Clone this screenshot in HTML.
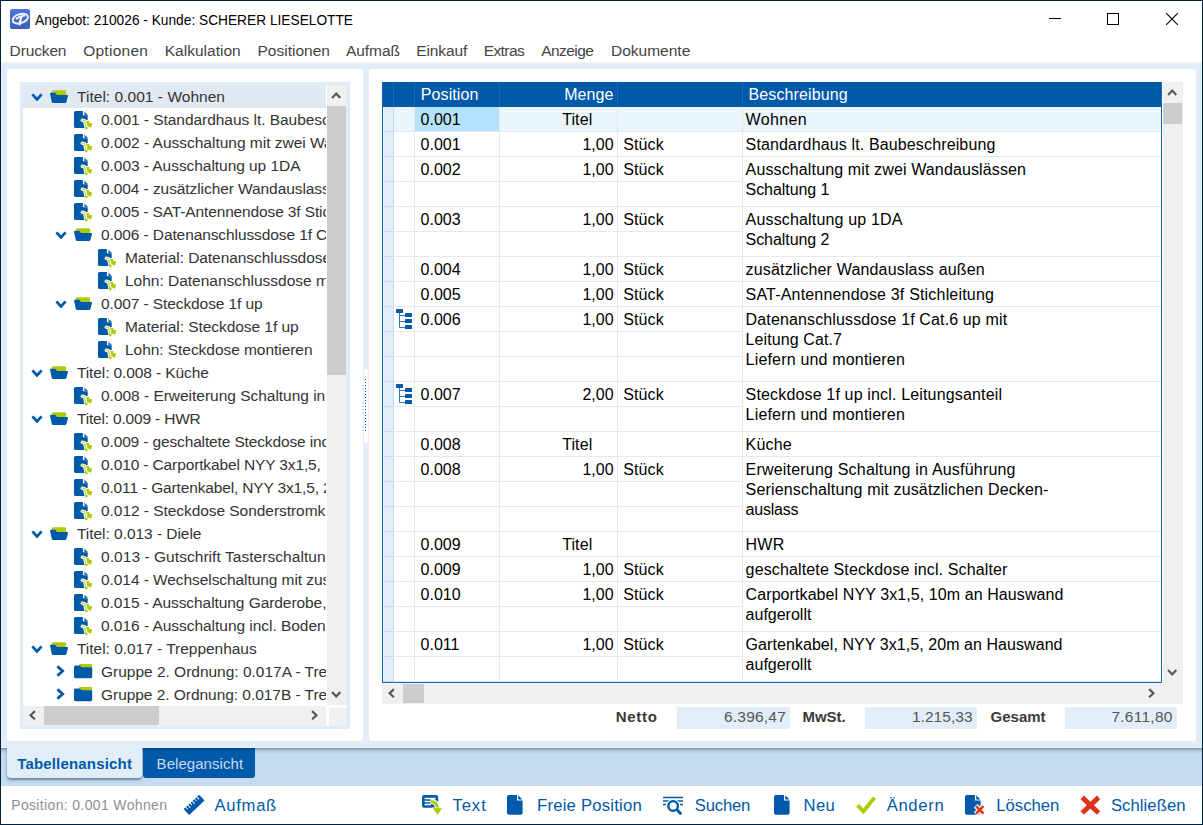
<!DOCTYPE html>
<html lang="de"><head><meta charset="utf-8"><title>Angebot: 210026 - Kunde: SCHERER LIESELOTTE</title>
<style>
html,body{margin:0;padding:0}
body{width:1203px;height:825px;position:relative;overflow:hidden;background:#fff;font-family:"Liberation Sans", Arial, sans-serif}
.b,.i,.t{position:absolute}
.t{white-space:pre;line-height:20px;height:20px}
.tr{font-size:15.5px;color:#333}
.a{letter-spacing:0}
</style></head>
<body>
<div class="b" style="left:0px;top:0px;width:1203px;height:825px;background:#fff;box-sizing:border-box;border:1px solid #02213f"></div>
<header class="titlebar">
<svg class="i" style="left:10px;top:9px" width="20" height="20" viewBox="0 0 20 20"><defs><linearGradient id="g" x1="0" y1="0" x2="0" y2="1"><stop offset="0" stop-color="#4d76da"/><stop offset="1" stop-color="#3a60bf"/></linearGradient></defs><rect width="20" height="20" rx="2.6" fill="url(#g)"/><ellipse cx="10.3" cy="9.6" rx="7.9" ry="4.5" transform="rotate(-17 10.3 9.6)" fill="none" stroke="#fff" stroke-width="1.9" opacity=".93"/><path d="M5.8 10Q9.6 7.2 15.2 6.4" stroke="#fff" stroke-width="1.7" fill="none" opacity=".95"/><path d="M11.3 7.6L9.3 16.2" stroke="#fff" stroke-width="2.2" fill="none" opacity=".97"/></svg>
<span class="t " style="top:9.63px;font-size:15.5px;color:#000;left:35.00px;transform:scaleX(0.8851);transform-origin:0 0;">Angebot: 210026 - Kunde: SCHERER LIESELOTTE</span>
<div class="b" style="left:1049px;top:18px;width:12px;height:1px;background:#000;"></div>
<div class="b" style="left:1107px;top:13px;width:12px;height:12px;background:transparent;box-sizing:border-box;border:1px solid #000"></div>
<svg class="i" style="left:1165px;top:12px" width="14" height="14" viewBox="0 0 14 14"><path d="M1.2 1.2L12.8 12.8M12.8 1.2L1.2 12.8" stroke="#000" stroke-width="1.1" fill="none"/></svg>
</header>
<nav class="menubar">
<span class="t " style="top:40.63px;font-size:15.5px;color:#444;letter-spacing:-0.136px;left:9.60px;">Drucken</span>
<span class="t " style="top:40.63px;font-size:15.5px;color:#444;letter-spacing:0.254px;left:83.20px;">Optionen</span>
<span class="t " style="top:40.63px;font-size:15.5px;color:#444;letter-spacing:0.017px;left:164.70px;">Kalkulation</span>
<span class="t " style="top:40.63px;font-size:15.5px;color:#444;letter-spacing:0.012px;left:257.50px;">Positionen</span>
<span class="t " style="top:40.63px;font-size:15.5px;color:#444;letter-spacing:-0.073px;left:346.00px;">Aufmaß</span>
<span class="t " style="top:40.63px;font-size:15.5px;color:#444;letter-spacing:-0.134px;left:416.30px;">Einkauf</span>
<span class="t " style="top:40.63px;font-size:15.5px;color:#444;letter-spacing:-0.588px;left:483.70px;">Extras</span>
<span class="t " style="top:40.63px;font-size:15.5px;color:#444;letter-spacing:-0.553px;left:541.20px;">Anzeige</span>
<span class="t " style="top:40.63px;font-size:15.5px;color:#444;letter-spacing:0.004px;left:611.00px;">Dokumente</span>
</nav>
<main class="content">
<div class="b" style="left:1px;top:62px;width:1201px;height:1px;background:#f0f0f0;"></div>
<div class="b" style="left:1px;top:63px;width:1201px;height:685px;background:#e1eefa;"></div>
<div class="b" style="left:1px;top:747px;width:1201px;height:1px;background:#e8f3fd;"></div>
<div class="b" style="left:7px;top:69px;width:356px;height:672px;background:#fff;border-radius:3px"></div>
<div class="b" style="left:369px;top:69px;width:827px;height:672px;background:#fff;border-radius:3px"></div>
<div class="b" style="left:364px;top:369px;width:4px;height:74px;background:#fff;border-radius:1px"></div>
<div class="b" style="left:365px;top:379px;width:1px;height:52px;background:transparent;background-image:repeating-linear-gradient(to bottom,#0059a9 0,#0059a9 1px,transparent 1px,transparent 3px)"></div>
<section class="tree-panel">
<div class="b" style="left:20px;top:82px;width:330px;height:647px;background:#fff;box-sizing:border-box;border:3px solid #deebf8"></div>
<div class="b" style="left:23px;top:85px;width:303px;height:23px;background:#e1e9f2;"></div>
<div class="b" style="left:23px;top:85px;width:303px;height:621px;overflow:hidden"><svg class="i" style="left:7.600000000000001px;top:7.6px" width="12" height="8.4" viewBox="0 0 12 8.4"><path d="M1.4 1.4L6.0 6.412000000000001L10.6 1.4" fill="none" stroke="#0059a9" stroke-width="2.8"/></svg><svg class="i" style="left:27px;top:5.2px" width="19" height="14" viewBox="0 0 19 14"><rect x="1.7" y="0.2" width="14.5" height="6.4" rx="1.5" fill="#afca0b"/><path fill="#0059a9" d="M1 2.8H4.8Q5.5 2.8 5.9 3.4L6.9 4.9H17.1Q18.3 4.9 18 6L16.4 12Q16.1 13 15 13H3.2Q2.1 13 1.8 12L0.1 4Q-0.2 2.8 1 2.8Z"/></svg><span class="t tr" style="left:54.0px;top:1.63px;letter-spacing:0.033px;">Titel: 0.001 - Wohnen</span><svg class="i" style="left:51.2px;top:26px" width="19" height="19" viewBox="0 0 19 19"><path fill="#0059a9" d="M1.5 0H8.9V4.2H13.7V15.5Q13.7 17 12.2 17H1.5Q0 17 0 15.5V1.5Q0 0 1.5 0Z"/><path fill="#2a70b6" d="M10.3 0.4L13.5 3.6L13.6 4.2H10.3Z"/><path fill="#fff" d="M6.6 8.9Q7.2 7.4 8.8 7.6L11.4 8.2 12.6 9.6 14.2 8.6V17.6H10.6L9.2 11.2 7.2 10.6Q6.2 10 6.6 8.9Z"/><path fill="none" stroke="#afca0b" stroke-opacity=".75" stroke-width="1.3" d="M7.6 8.9L10.5 9.5 11.9 16"/><path fill="#afca0b" d="M12.3 9.9L15.2 10 15.4 12 18 12.2 18 14.4 17.2 14.6 17.6 16.2 13.4 15.4 12.8 12Z"/><rect x="11.2" y="15.9" width="2.3" height="2.3" fill="#afca0b"/><rect x="15.4" y="16.4" width="1.6" height="1.2" fill="#afca0b" opacity=".55"/></svg><span class="t tr" style="left:78.0px;top:24.63px;letter-spacing:-0.043px;">0.001 - Standardhaus lt. Baubeschreibung</span><svg class="i" style="left:51.2px;top:49px" width="19" height="19" viewBox="0 0 19 19"><path fill="#0059a9" d="M1.5 0H8.9V4.2H13.7V15.5Q13.7 17 12.2 17H1.5Q0 17 0 15.5V1.5Q0 0 1.5 0Z"/><path fill="#2a70b6" d="M10.3 0.4L13.5 3.6L13.6 4.2H10.3Z"/><path fill="#fff" d="M6.6 8.9Q7.2 7.4 8.8 7.6L11.4 8.2 12.6 9.6 14.2 8.6V17.6H10.6L9.2 11.2 7.2 10.6Q6.2 10 6.6 8.9Z"/><path fill="none" stroke="#afca0b" stroke-opacity=".75" stroke-width="1.3" d="M7.6 8.9L10.5 9.5 11.9 16"/><path fill="#afca0b" d="M12.3 9.9L15.2 10 15.4 12 18 12.2 18 14.4 17.2 14.6 17.6 16.2 13.4 15.4 12.8 12Z"/><rect x="11.2" y="15.9" width="2.3" height="2.3" fill="#afca0b"/><rect x="15.4" y="16.4" width="1.6" height="1.2" fill="#afca0b" opacity=".55"/></svg><span class="t tr" style="left:78.0px;top:47.63px;letter-spacing:-0.013px;">0.002 - Ausschaltung mit zwei Wandauslässen</span><svg class="i" style="left:51.2px;top:72px" width="19" height="19" viewBox="0 0 19 19"><path fill="#0059a9" d="M1.5 0H8.9V4.2H13.7V15.5Q13.7 17 12.2 17H1.5Q0 17 0 15.5V1.5Q0 0 1.5 0Z"/><path fill="#2a70b6" d="M10.3 0.4L13.5 3.6L13.6 4.2H10.3Z"/><path fill="#fff" d="M6.6 8.9Q7.2 7.4 8.8 7.6L11.4 8.2 12.6 9.6 14.2 8.6V17.6H10.6L9.2 11.2 7.2 10.6Q6.2 10 6.6 8.9Z"/><path fill="none" stroke="#afca0b" stroke-opacity=".75" stroke-width="1.3" d="M7.6 8.9L10.5 9.5 11.9 16"/><path fill="#afca0b" d="M12.3 9.9L15.2 10 15.4 12 18 12.2 18 14.4 17.2 14.6 17.6 16.2 13.4 15.4 12.8 12Z"/><rect x="11.2" y="15.9" width="2.3" height="2.3" fill="#afca0b"/><rect x="15.4" y="16.4" width="1.6" height="1.2" fill="#afca0b" opacity=".55"/></svg><span class="t tr" style="left:78.0px;top:70.63px;letter-spacing:-0.049px;">0.003 - Ausschaltung up 1DA</span><svg class="i" style="left:51.2px;top:95px" width="19" height="19" viewBox="0 0 19 19"><path fill="#0059a9" d="M1.5 0H8.9V4.2H13.7V15.5Q13.7 17 12.2 17H1.5Q0 17 0 15.5V1.5Q0 0 1.5 0Z"/><path fill="#2a70b6" d="M10.3 0.4L13.5 3.6L13.6 4.2H10.3Z"/><path fill="#fff" d="M6.6 8.9Q7.2 7.4 8.8 7.6L11.4 8.2 12.6 9.6 14.2 8.6V17.6H10.6L9.2 11.2 7.2 10.6Q6.2 10 6.6 8.9Z"/><path fill="none" stroke="#afca0b" stroke-opacity=".75" stroke-width="1.3" d="M7.6 8.9L10.5 9.5 11.9 16"/><path fill="#afca0b" d="M12.3 9.9L15.2 10 15.4 12 18 12.2 18 14.4 17.2 14.6 17.6 16.2 13.4 15.4 12.8 12Z"/><rect x="11.2" y="15.9" width="2.3" height="2.3" fill="#afca0b"/><rect x="15.4" y="16.4" width="1.6" height="1.2" fill="#afca0b" opacity=".55"/></svg><span class="t tr" style="left:78.0px;top:93.63px;letter-spacing:-0.079px;">0.004 - zusätzlicher Wandauslass außen</span><svg class="i" style="left:51.2px;top:118px" width="19" height="19" viewBox="0 0 19 19"><path fill="#0059a9" d="M1.5 0H8.9V4.2H13.7V15.5Q13.7 17 12.2 17H1.5Q0 17 0 15.5V1.5Q0 0 1.5 0Z"/><path fill="#2a70b6" d="M10.3 0.4L13.5 3.6L13.6 4.2H10.3Z"/><path fill="#fff" d="M6.6 8.9Q7.2 7.4 8.8 7.6L11.4 8.2 12.6 9.6 14.2 8.6V17.6H10.6L9.2 11.2 7.2 10.6Q6.2 10 6.6 8.9Z"/><path fill="none" stroke="#afca0b" stroke-opacity=".75" stroke-width="1.3" d="M7.6 8.9L10.5 9.5 11.9 16"/><path fill="#afca0b" d="M12.3 9.9L15.2 10 15.4 12 18 12.2 18 14.4 17.2 14.6 17.6 16.2 13.4 15.4 12.8 12Z"/><rect x="11.2" y="15.9" width="2.3" height="2.3" fill="#afca0b"/><rect x="15.4" y="16.4" width="1.6" height="1.2" fill="#afca0b" opacity=".55"/></svg><span class="t tr" style="left:78.0px;top:116.63px;letter-spacing:-0.132px;">0.005 - SAT-Antennendose 3f Stichleitung</span><svg class="i" style="left:31.6px;top:145.6px" width="12" height="8.4" viewBox="0 0 12 8.4"><path d="M1.4 1.4L6.0 6.412000000000001L10.6 1.4" fill="none" stroke="#0059a9" stroke-width="2.8"/></svg><svg class="i" style="left:51px;top:143.2px" width="19" height="14" viewBox="0 0 19 14"><rect x="1.7" y="0.2" width="14.5" height="6.4" rx="1.5" fill="#afca0b"/><path fill="#0059a9" d="M1 2.8H4.8Q5.5 2.8 5.9 3.4L6.9 4.9H17.1Q18.3 4.9 18 6L16.4 12Q16.1 13 15 13H3.2Q2.1 13 1.8 12L0.1 4Q-0.2 2.8 1 2.8Z"/></svg><span class="t tr" style="left:78.0px;top:139.63px;letter-spacing:-0.097px;">0.006 - Datenanschlussdose 1f Cat.6 up mit</span><svg class="i" style="left:75.2px;top:164px" width="19" height="19" viewBox="0 0 19 19"><path fill="#0059a9" d="M1.5 0H8.9V4.2H13.7V15.5Q13.7 17 12.2 17H1.5Q0 17 0 15.5V1.5Q0 0 1.5 0Z"/><path fill="#2a70b6" d="M10.3 0.4L13.5 3.6L13.6 4.2H10.3Z"/><path fill="#fff" d="M6.6 8.9Q7.2 7.4 8.8 7.6L11.4 8.2 12.6 9.6 14.2 8.6V17.6H10.6L9.2 11.2 7.2 10.6Q6.2 10 6.6 8.9Z"/><path fill="none" stroke="#afca0b" stroke-opacity=".75" stroke-width="1.3" d="M7.6 8.9L10.5 9.5 11.9 16"/><path fill="#afca0b" d="M12.3 9.9L15.2 10 15.4 12 18 12.2 18 14.4 17.2 14.6 17.6 16.2 13.4 15.4 12.8 12Z"/><rect x="11.2" y="15.9" width="2.3" height="2.3" fill="#afca0b"/><rect x="15.4" y="16.4" width="1.6" height="1.2" fill="#afca0b" opacity=".55"/></svg><span class="t tr" style="left:102.0px;top:162.63px;letter-spacing:-0.060px;">Material: Datenanschlussdose 1f Cat.6</span><svg class="i" style="left:75.2px;top:187px" width="19" height="19" viewBox="0 0 19 19"><path fill="#0059a9" d="M1.5 0H8.9V4.2H13.7V15.5Q13.7 17 12.2 17H1.5Q0 17 0 15.5V1.5Q0 0 1.5 0Z"/><path fill="#2a70b6" d="M10.3 0.4L13.5 3.6L13.6 4.2H10.3Z"/><path fill="#fff" d="M6.6 8.9Q7.2 7.4 8.8 7.6L11.4 8.2 12.6 9.6 14.2 8.6V17.6H10.6L9.2 11.2 7.2 10.6Q6.2 10 6.6 8.9Z"/><path fill="none" stroke="#afca0b" stroke-opacity=".75" stroke-width="1.3" d="M7.6 8.9L10.5 9.5 11.9 16"/><path fill="#afca0b" d="M12.3 9.9L15.2 10 15.4 12 18 12.2 18 14.4 17.2 14.6 17.6 16.2 13.4 15.4 12.8 12Z"/><rect x="11.2" y="15.9" width="2.3" height="2.3" fill="#afca0b"/><rect x="15.4" y="16.4" width="1.6" height="1.2" fill="#afca0b" opacity=".55"/></svg><span class="t tr" style="left:102.0px;top:185.63px;letter-spacing:-0.016px;">Lohn: Datenanschlussdose montieren</span><svg class="i" style="left:31.6px;top:214.6px" width="12" height="8.4" viewBox="0 0 12 8.4"><path d="M1.4 1.4L6.0 6.412000000000001L10.6 1.4" fill="none" stroke="#0059a9" stroke-width="2.8"/></svg><svg class="i" style="left:51px;top:212.2px" width="19" height="14" viewBox="0 0 19 14"><rect x="1.7" y="0.2" width="14.5" height="6.4" rx="1.5" fill="#afca0b"/><path fill="#0059a9" d="M1 2.8H4.8Q5.5 2.8 5.9 3.4L6.9 4.9H17.1Q18.3 4.9 18 6L16.4 12Q16.1 13 15 13H3.2Q2.1 13 1.8 12L0.1 4Q-0.2 2.8 1 2.8Z"/></svg><span class="t tr" style="left:78.0px;top:208.63px;letter-spacing:-0.096px;">0.007 - Steckdose 1f up</span><svg class="i" style="left:75.2px;top:233px" width="19" height="19" viewBox="0 0 19 19"><path fill="#0059a9" d="M1.5 0H8.9V4.2H13.7V15.5Q13.7 17 12.2 17H1.5Q0 17 0 15.5V1.5Q0 0 1.5 0Z"/><path fill="#2a70b6" d="M10.3 0.4L13.5 3.6L13.6 4.2H10.3Z"/><path fill="#fff" d="M6.6 8.9Q7.2 7.4 8.8 7.6L11.4 8.2 12.6 9.6 14.2 8.6V17.6H10.6L9.2 11.2 7.2 10.6Q6.2 10 6.6 8.9Z"/><path fill="none" stroke="#afca0b" stroke-opacity=".75" stroke-width="1.3" d="M7.6 8.9L10.5 9.5 11.9 16"/><path fill="#afca0b" d="M12.3 9.9L15.2 10 15.4 12 18 12.2 18 14.4 17.2 14.6 17.6 16.2 13.4 15.4 12.8 12Z"/><rect x="11.2" y="15.9" width="2.3" height="2.3" fill="#afca0b"/><rect x="15.4" y="16.4" width="1.6" height="1.2" fill="#afca0b" opacity=".55"/></svg><span class="t tr" style="left:102.0px;top:231.63px;letter-spacing:-0.054px;">Material: Steckdose 1f up</span><svg class="i" style="left:75.2px;top:256px" width="19" height="19" viewBox="0 0 19 19"><path fill="#0059a9" d="M1.5 0H8.9V4.2H13.7V15.5Q13.7 17 12.2 17H1.5Q0 17 0 15.5V1.5Q0 0 1.5 0Z"/><path fill="#2a70b6" d="M10.3 0.4L13.5 3.6L13.6 4.2H10.3Z"/><path fill="#fff" d="M6.6 8.9Q7.2 7.4 8.8 7.6L11.4 8.2 12.6 9.6 14.2 8.6V17.6H10.6L9.2 11.2 7.2 10.6Q6.2 10 6.6 8.9Z"/><path fill="none" stroke="#afca0b" stroke-opacity=".75" stroke-width="1.3" d="M7.6 8.9L10.5 9.5 11.9 16"/><path fill="#afca0b" d="M12.3 9.9L15.2 10 15.4 12 18 12.2 18 14.4 17.2 14.6 17.6 16.2 13.4 15.4 12.8 12Z"/><rect x="11.2" y="15.9" width="2.3" height="2.3" fill="#afca0b"/><rect x="15.4" y="16.4" width="1.6" height="1.2" fill="#afca0b" opacity=".55"/></svg><span class="t tr" style="left:102.0px;top:254.63px;letter-spacing:-0.050px;">Lohn: Steckdose montieren</span><svg class="i" style="left:7.600000000000001px;top:283.6px" width="12" height="8.4" viewBox="0 0 12 8.4"><path d="M1.4 1.4L6.0 6.412000000000001L10.6 1.4" fill="none" stroke="#0059a9" stroke-width="2.8"/></svg><svg class="i" style="left:27px;top:281.2px" width="19" height="14" viewBox="0 0 19 14"><rect x="1.7" y="0.2" width="14.5" height="6.4" rx="1.5" fill="#afca0b"/><path fill="#0059a9" d="M1 2.8H4.8Q5.5 2.8 5.9 3.4L6.9 4.9H17.1Q18.3 4.9 18 6L16.4 12Q16.1 13 15 13H3.2Q2.1 13 1.8 12L0.1 4Q-0.2 2.8 1 2.8Z"/></svg><span class="t tr" style="left:54.0px;top:277.63px;letter-spacing:-0.108px;">Titel: 0.008 - Küche</span><svg class="i" style="left:51.2px;top:302px" width="19" height="19" viewBox="0 0 19 19"><path fill="#0059a9" d="M1.5 0H8.9V4.2H13.7V15.5Q13.7 17 12.2 17H1.5Q0 17 0 15.5V1.5Q0 0 1.5 0Z"/><path fill="#2a70b6" d="M10.3 0.4L13.5 3.6L13.6 4.2H10.3Z"/><path fill="#fff" d="M6.6 8.9Q7.2 7.4 8.8 7.6L11.4 8.2 12.6 9.6 14.2 8.6V17.6H10.6L9.2 11.2 7.2 10.6Q6.2 10 6.6 8.9Z"/><path fill="none" stroke="#afca0b" stroke-opacity=".75" stroke-width="1.3" d="M7.6 8.9L10.5 9.5 11.9 16"/><path fill="#afca0b" d="M12.3 9.9L15.2 10 15.4 12 18 12.2 18 14.4 17.2 14.6 17.6 16.2 13.4 15.4 12.8 12Z"/><rect x="11.2" y="15.9" width="2.3" height="2.3" fill="#afca0b"/><rect x="15.4" y="16.4" width="1.6" height="1.2" fill="#afca0b" opacity=".55"/></svg><span class="t tr" style="left:78.0px;top:300.63px;letter-spacing:-0.022px;">0.008 - Erweiterung Schaltung in Ausführung</span><svg class="i" style="left:7.600000000000001px;top:329.6px" width="12" height="8.4" viewBox="0 0 12 8.4"><path d="M1.4 1.4L6.0 6.412000000000001L10.6 1.4" fill="none" stroke="#0059a9" stroke-width="2.8"/></svg><svg class="i" style="left:27px;top:327.2px" width="19" height="14" viewBox="0 0 19 14"><rect x="1.7" y="0.2" width="14.5" height="6.4" rx="1.5" fill="#afca0b"/><path fill="#0059a9" d="M1 2.8H4.8Q5.5 2.8 5.9 3.4L6.9 4.9H17.1Q18.3 4.9 18 6L16.4 12Q16.1 13 15 13H3.2Q2.1 13 1.8 12L0.1 4Q-0.2 2.8 1 2.8Z"/></svg><span class="t tr" style="left:54.0px;top:323.63px;letter-spacing:-0.183px;">Titel: 0.009 - HWR</span><svg class="i" style="left:51.2px;top:348px" width="19" height="19" viewBox="0 0 19 19"><path fill="#0059a9" d="M1.5 0H8.9V4.2H13.7V15.5Q13.7 17 12.2 17H1.5Q0 17 0 15.5V1.5Q0 0 1.5 0Z"/><path fill="#2a70b6" d="M10.3 0.4L13.5 3.6L13.6 4.2H10.3Z"/><path fill="#fff" d="M6.6 8.9Q7.2 7.4 8.8 7.6L11.4 8.2 12.6 9.6 14.2 8.6V17.6H10.6L9.2 11.2 7.2 10.6Q6.2 10 6.6 8.9Z"/><path fill="none" stroke="#afca0b" stroke-opacity=".75" stroke-width="1.3" d="M7.6 8.9L10.5 9.5 11.9 16"/><path fill="#afca0b" d="M12.3 9.9L15.2 10 15.4 12 18 12.2 18 14.4 17.2 14.6 17.6 16.2 13.4 15.4 12.8 12Z"/><rect x="11.2" y="15.9" width="2.3" height="2.3" fill="#afca0b"/><rect x="15.4" y="16.4" width="1.6" height="1.2" fill="#afca0b" opacity=".55"/></svg><span class="t tr" style="left:78.0px;top:346.63px;letter-spacing:-0.138px;">0.009 - geschaltete Steckdose incl. Schalter</span><svg class="i" style="left:51.2px;top:371px" width="19" height="19" viewBox="0 0 19 19"><path fill="#0059a9" d="M1.5 0H8.9V4.2H13.7V15.5Q13.7 17 12.2 17H1.5Q0 17 0 15.5V1.5Q0 0 1.5 0Z"/><path fill="#2a70b6" d="M10.3 0.4L13.5 3.6L13.6 4.2H10.3Z"/><path fill="#fff" d="M6.6 8.9Q7.2 7.4 8.8 7.6L11.4 8.2 12.6 9.6 14.2 8.6V17.6H10.6L9.2 11.2 7.2 10.6Q6.2 10 6.6 8.9Z"/><path fill="none" stroke="#afca0b" stroke-opacity=".75" stroke-width="1.3" d="M7.6 8.9L10.5 9.5 11.9 16"/><path fill="#afca0b" d="M12.3 9.9L15.2 10 15.4 12 18 12.2 18 14.4 17.2 14.6 17.6 16.2 13.4 15.4 12.8 12Z"/><rect x="11.2" y="15.9" width="2.3" height="2.3" fill="#afca0b"/><rect x="15.4" y="16.4" width="1.6" height="1.2" fill="#afca0b" opacity=".55"/></svg><span class="t tr" style="left:78.0px;top:369.63px;letter-spacing:-0.127px;">0.010 - Carportkabel NYY 3x1,5, 10m an Hauswand</span><svg class="i" style="left:51.2px;top:394px" width="19" height="19" viewBox="0 0 19 19"><path fill="#0059a9" d="M1.5 0H8.9V4.2H13.7V15.5Q13.7 17 12.2 17H1.5Q0 17 0 15.5V1.5Q0 0 1.5 0Z"/><path fill="#2a70b6" d="M10.3 0.4L13.5 3.6L13.6 4.2H10.3Z"/><path fill="#fff" d="M6.6 8.9Q7.2 7.4 8.8 7.6L11.4 8.2 12.6 9.6 14.2 8.6V17.6H10.6L9.2 11.2 7.2 10.6Q6.2 10 6.6 8.9Z"/><path fill="none" stroke="#afca0b" stroke-opacity=".75" stroke-width="1.3" d="M7.6 8.9L10.5 9.5 11.9 16"/><path fill="#afca0b" d="M12.3 9.9L15.2 10 15.4 12 18 12.2 18 14.4 17.2 14.6 17.6 16.2 13.4 15.4 12.8 12Z"/><rect x="11.2" y="15.9" width="2.3" height="2.3" fill="#afca0b"/><rect x="15.4" y="16.4" width="1.6" height="1.2" fill="#afca0b" opacity=".55"/></svg><span class="t tr" style="left:78.0px;top:392.63px;letter-spacing:-0.153px;">0.011 - Gartenkabel, NYY 3x1,5, 20m an Hauswand</span><svg class="i" style="left:51.2px;top:417px" width="19" height="19" viewBox="0 0 19 19"><path fill="#0059a9" d="M1.5 0H8.9V4.2H13.7V15.5Q13.7 17 12.2 17H1.5Q0 17 0 15.5V1.5Q0 0 1.5 0Z"/><path fill="#2a70b6" d="M10.3 0.4L13.5 3.6L13.6 4.2H10.3Z"/><path fill="#fff" d="M6.6 8.9Q7.2 7.4 8.8 7.6L11.4 8.2 12.6 9.6 14.2 8.6V17.6H10.6L9.2 11.2 7.2 10.6Q6.2 10 6.6 8.9Z"/><path fill="none" stroke="#afca0b" stroke-opacity=".75" stroke-width="1.3" d="M7.6 8.9L10.5 9.5 11.9 16"/><path fill="#afca0b" d="M12.3 9.9L15.2 10 15.4 12 18 12.2 18 14.4 17.2 14.6 17.6 16.2 13.4 15.4 12.8 12Z"/><rect x="11.2" y="15.9" width="2.3" height="2.3" fill="#afca0b"/><rect x="15.4" y="16.4" width="1.6" height="1.2" fill="#afca0b" opacity=".55"/></svg><span class="t tr" style="left:78.0px;top:415.63px;letter-spacing:-0.051px;">0.012 - Steckdose Sonderstromkreis</span><svg class="i" style="left:7.600000000000001px;top:444.6px" width="12" height="8.4" viewBox="0 0 12 8.4"><path d="M1.4 1.4L6.0 6.412000000000001L10.6 1.4" fill="none" stroke="#0059a9" stroke-width="2.8"/></svg><svg class="i" style="left:27px;top:442.2px" width="19" height="14" viewBox="0 0 19 14"><rect x="1.7" y="0.2" width="14.5" height="6.4" rx="1.5" fill="#afca0b"/><path fill="#0059a9" d="M1 2.8H4.8Q5.5 2.8 5.9 3.4L6.9 4.9H17.1Q18.3 4.9 18 6L16.4 12Q16.1 13 15 13H3.2Q2.1 13 1.8 12L0.1 4Q-0.2 2.8 1 2.8Z"/></svg><span class="t tr" style="left:54.0px;top:438.63px;letter-spacing:-0.038px;">Titel: 0.013 - Diele</span><svg class="i" style="left:51.2px;top:463px" width="19" height="19" viewBox="0 0 19 19"><path fill="#0059a9" d="M1.5 0H8.9V4.2H13.7V15.5Q13.7 17 12.2 17H1.5Q0 17 0 15.5V1.5Q0 0 1.5 0Z"/><path fill="#2a70b6" d="M10.3 0.4L13.5 3.6L13.6 4.2H10.3Z"/><path fill="#fff" d="M6.6 8.9Q7.2 7.4 8.8 7.6L11.4 8.2 12.6 9.6 14.2 8.6V17.6H10.6L9.2 11.2 7.2 10.6Q6.2 10 6.6 8.9Z"/><path fill="none" stroke="#afca0b" stroke-opacity=".75" stroke-width="1.3" d="M7.6 8.9L10.5 9.5 11.9 16"/><path fill="#afca0b" d="M12.3 9.9L15.2 10 15.4 12 18 12.2 18 14.4 17.2 14.6 17.6 16.2 13.4 15.4 12.8 12Z"/><rect x="11.2" y="15.9" width="2.3" height="2.3" fill="#afca0b"/><rect x="15.4" y="16.4" width="1.6" height="1.2" fill="#afca0b" opacity=".55"/></svg><span class="t tr" style="left:78.0px;top:461.63px;letter-spacing:0.053px;">0.013 - Gutschrift Tasterschaltung</span><svg class="i" style="left:51.2px;top:486px" width="19" height="19" viewBox="0 0 19 19"><path fill="#0059a9" d="M1.5 0H8.9V4.2H13.7V15.5Q13.7 17 12.2 17H1.5Q0 17 0 15.5V1.5Q0 0 1.5 0Z"/><path fill="#2a70b6" d="M10.3 0.4L13.5 3.6L13.6 4.2H10.3Z"/><path fill="#fff" d="M6.6 8.9Q7.2 7.4 8.8 7.6L11.4 8.2 12.6 9.6 14.2 8.6V17.6H10.6L9.2 11.2 7.2 10.6Q6.2 10 6.6 8.9Z"/><path fill="none" stroke="#afca0b" stroke-opacity=".75" stroke-width="1.3" d="M7.6 8.9L10.5 9.5 11.9 16"/><path fill="#afca0b" d="M12.3 9.9L15.2 10 15.4 12 18 12.2 18 14.4 17.2 14.6 17.6 16.2 13.4 15.4 12.8 12Z"/><rect x="11.2" y="15.9" width="2.3" height="2.3" fill="#afca0b"/><rect x="15.4" y="16.4" width="1.6" height="1.2" fill="#afca0b" opacity=".55"/></svg><span class="t tr" style="left:78.0px;top:484.63px;letter-spacing:-0.072px;">0.014 - Wechselschaltung mit zusätzlichem</span><svg class="i" style="left:51.2px;top:509px" width="19" height="19" viewBox="0 0 19 19"><path fill="#0059a9" d="M1.5 0H8.9V4.2H13.7V15.5Q13.7 17 12.2 17H1.5Q0 17 0 15.5V1.5Q0 0 1.5 0Z"/><path fill="#2a70b6" d="M10.3 0.4L13.5 3.6L13.6 4.2H10.3Z"/><path fill="#fff" d="M6.6 8.9Q7.2 7.4 8.8 7.6L11.4 8.2 12.6 9.6 14.2 8.6V17.6H10.6L9.2 11.2 7.2 10.6Q6.2 10 6.6 8.9Z"/><path fill="none" stroke="#afca0b" stroke-opacity=".75" stroke-width="1.3" d="M7.6 8.9L10.5 9.5 11.9 16"/><path fill="#afca0b" d="M12.3 9.9L15.2 10 15.4 12 18 12.2 18 14.4 17.2 14.6 17.6 16.2 13.4 15.4 12.8 12Z"/><rect x="11.2" y="15.9" width="2.3" height="2.3" fill="#afca0b"/><rect x="15.4" y="16.4" width="1.6" height="1.2" fill="#afca0b" opacity=".55"/></svg><span class="t tr" style="left:78.0px;top:507.63px;letter-spacing:-0.067px;">0.015 - Ausschaltung Garderobe, Flur</span><svg class="i" style="left:51.2px;top:532px" width="19" height="19" viewBox="0 0 19 19"><path fill="#0059a9" d="M1.5 0H8.9V4.2H13.7V15.5Q13.7 17 12.2 17H1.5Q0 17 0 15.5V1.5Q0 0 1.5 0Z"/><path fill="#2a70b6" d="M10.3 0.4L13.5 3.6L13.6 4.2H10.3Z"/><path fill="#fff" d="M6.6 8.9Q7.2 7.4 8.8 7.6L11.4 8.2 12.6 9.6 14.2 8.6V17.6H10.6L9.2 11.2 7.2 10.6Q6.2 10 6.6 8.9Z"/><path fill="none" stroke="#afca0b" stroke-opacity=".75" stroke-width="1.3" d="M7.6 8.9L10.5 9.5 11.9 16"/><path fill="#afca0b" d="M12.3 9.9L15.2 10 15.4 12 18 12.2 18 14.4 17.2 14.6 17.6 16.2 13.4 15.4 12.8 12Z"/><rect x="11.2" y="15.9" width="2.3" height="2.3" fill="#afca0b"/><rect x="15.4" y="16.4" width="1.6" height="1.2" fill="#afca0b" opacity=".55"/></svg><span class="t tr" style="left:78.0px;top:530.63px;letter-spacing:-0.036px;">0.016 - Ausschaltung incl. Bodenauslass</span><svg class="i" style="left:7.600000000000001px;top:559.6px" width="12" height="8.4" viewBox="0 0 12 8.4"><path d="M1.4 1.4L6.0 6.412000000000001L10.6 1.4" fill="none" stroke="#0059a9" stroke-width="2.8"/></svg><svg class="i" style="left:27px;top:557.2px" width="19" height="14" viewBox="0 0 19 14"><rect x="1.7" y="0.2" width="14.5" height="6.4" rx="1.5" fill="#afca0b"/><path fill="#0059a9" d="M1 2.8H4.8Q5.5 2.8 5.9 3.4L6.9 4.9H17.1Q18.3 4.9 18 6L16.4 12Q16.1 13 15 13H3.2Q2.1 13 1.8 12L0.1 4Q-0.2 2.8 1 2.8Z"/></svg><span class="t tr" style="left:54.0px;top:553.63px;letter-spacing:-0.027px;">Titel: 0.017 - Treppenhaus</span><svg class="i" style="left:33px;top:580.4px" width="8.6" height="12" viewBox="0 0 8.6 12"><path d="M1.4 1.4L6.612 6.0L1.4 10.6" fill="none" stroke="#0059a9" stroke-width="2.8"/></svg><svg class="i" style="left:50.8px;top:579.2px" width="19" height="15" viewBox="0 0 19 15"><path fill="#afca0b" d="M5 1.4Q5 0 6.4 0H16.6Q18.2 0 18.2 1.6V5H5Z"/><path fill="#0059a9" d="M0 3Q0 1.6 1.4 1.6H5.4Q6.2 1.6 6.7 2.2L7.6 3.2H16.8Q18.2 3.2 18.2 4.6V12.8Q18.2 14.2 16.8 14.2H1.4Q0 14.2 0 12.8Z"/></svg><span class="t tr" style="left:78.0px;top:576.63px;letter-spacing:-0.013px;">Gruppe 2. Ordnung: 0.017A - Treppe</span><svg class="i" style="left:33px;top:603.4px" width="8.6" height="12" viewBox="0 0 8.6 12"><path d="M1.4 1.4L6.612 6.0L1.4 10.6" fill="none" stroke="#0059a9" stroke-width="2.8"/></svg><svg class="i" style="left:50.8px;top:602.2px" width="19" height="15" viewBox="0 0 19 15"><path fill="#afca0b" d="M5 1.4Q5 0 6.4 0H16.6Q18.2 0 18.2 1.6V5H5Z"/><path fill="#0059a9" d="M0 3Q0 1.6 1.4 1.6H5.4Q6.2 1.6 6.7 2.2L7.6 3.2H16.8Q18.2 3.2 18.2 4.6V12.8Q18.2 14.2 16.8 14.2H1.4Q0 14.2 0 12.8Z"/></svg><span class="t tr" style="left:78.0px;top:599.63px;letter-spacing:-0.042px;">Gruppe 2. Ordnung: 0.017B - Treppe</span></div>
<div class="b" style="left:327px;top:85px;width:20px;height:620px;background:#f0f0f0;"></div>
<div class="b" style="left:327px;top:106px;width:19px;height:269px;background:#cdcdcd;"></div>
<svg class="i" style="left:331.1px;top:91.6px" width="10.4" height="7" viewBox="0 0 10.4 7"><path d="M1.1 5.9L5.2 1.562L9.3 5.9" fill="none" stroke="#585858" stroke-width="2.2"/></svg>
<svg class="i" style="left:331.1px;top:691px" width="10.4" height="7" viewBox="0 0 10.4 7"><path d="M1.1 1.1L5.2 5.438L9.3 1.1" fill="none" stroke="#585858" stroke-width="2.2"/></svg>
<div class="b" style="left:23px;top:706px;width:303px;height:20px;background:#f0f0f0;"></div>
<div class="b" style="left:44px;top:706px;width:115px;height:19px;background:#cdcdcd;"></div>
<svg class="i" style="left:29px;top:710px" width="7" height="10.4" viewBox="0 0 7 10.4"><path d="M5.9 1.1L1.562 5.2L5.9 9.3" fill="none" stroke="#585858" stroke-width="2.2"/></svg>
<svg class="i" style="left:311.4px;top:710px" width="7" height="10.4" viewBox="0 0 7 10.4"><path d="M1.1 1.1L5.438 5.2L1.1 9.3" fill="none" stroke="#585858" stroke-width="2.2"/></svg>
<div class="b" style="left:329px;top:708px;width:18px;height:18px;background:#f0f0f0;"></div>
</section>
<section class="grid-panel">
<div class="b" style="left:382px;top:82px;width:780px;height:601px;background:#fff;box-sizing:border-box;border:1px solid #1464b0"></div>
<div class="b" style="left:383px;top:82px;width:778px;height:25px;background:#0059a9;"></div>
<div class="b" style="left:393px;top:83px;width:1px;height:24px;background:#1f69b2;"></div>
<div class="b" style="left:414px;top:83px;width:1px;height:24px;background:#1f69b2;"></div>
<div class="b" style="left:499px;top:83px;width:1px;height:24px;background:#1f69b2;"></div>
<div class="b" style="left:617px;top:83px;width:1px;height:24px;background:#1f69b2;"></div>
<div class="b" style="left:742px;top:83px;width:1px;height:24px;background:#1f69b2;"></div>
<span class="t a" style="top:85.46px;font-size:16px;color:#fff;letter-spacing:0.100px;left:420.80px;">Position</span>
<span class="t a" style="top:85.46px;font-size:16px;color:#fff;letter-spacing:0.100px;right:589.40px;">Menge</span>
<span class="t a" style="top:85.46px;font-size:16px;color:#fff;letter-spacing:0.100px;left:748.60px;">Beschreibung</span>
<div class="b" style="left:383px;top:107px;width:10px;height:575px;background:#e1eefa;"></div>
<div class="b" style="left:383px;top:107px;width:1px;height:575px;background:#eef6fd;"></div>
<div class="b" style="left:393px;top:107px;width:768px;height:24px;background:#eaf5fc;"></div>
<div class="b" style="left:415px;top:107px;width:84px;height:25px;background:#b4e3fd;"></div>
<div class="b" style="left:393px;top:107px;width:1px;height:575px;background:#c9dcee;"></div>
<div class="b" style="left:414px;top:107px;width:1px;height:575px;background:#e1eaf0;"></div>
<div class="b" style="left:499px;top:107px;width:1px;height:575px;background:#e1eaf0;"></div>
<div class="b" style="left:617px;top:107px;width:1px;height:575px;background:#e1eaf0;"></div>
<div class="b" style="left:742px;top:107px;width:1px;height:575px;background:#e1eaf0;"></div>
<div class="b" style="left:383px;top:131px;width:778px;height:1px;background:#e1eaf0;"></div>
<div class="b" style="left:383px;top:131px;width:10px;height:1px;background:#c9dcee;"></div>
<span class="t a" style="top:110.46px;font-size:16px;color:#000;left:420.60px;">0.001</span>
<span class="t a" style="top:110.46px;font-size:16px;color:#000;letter-spacing:0.100px;left:562.20px;">Titel</span>
<span class="t a" style="top:110.46px;font-size:16px;color:#000;letter-spacing:0.338px;left:745.60px;">Wohnen</span>
<div class="b" style="left:383px;top:156px;width:778px;height:1px;background:#e1eaf0;"></div>
<div class="b" style="left:383px;top:156px;width:10px;height:1px;background:#c9dcee;"></div>
<span class="t a" style="top:135.46px;font-size:16px;color:#000;left:420.60px;">0.001</span>
<span class="t a" style="top:135.46px;font-size:16px;color:#000;right:589.40px;">1,00</span>
<span class="t a" style="top:135.46px;font-size:16px;color:#000;letter-spacing:0.100px;left:623.30px;">Stück</span>
<span class="t a" style="top:135.46px;font-size:16px;color:#000;letter-spacing:0.138px;left:745.60px;">Standardhaus lt. Baubeschreibung</span>
<div class="b" style="left:383px;top:181px;width:359px;height:1px;background:#e1eaf0;"></div>
<div class="b" style="left:383px;top:181px;width:10px;height:1px;background:#c9dcee;"></div>
<div class="b" style="left:383px;top:206px;width:778px;height:1px;background:#e1eaf0;"></div>
<div class="b" style="left:383px;top:206px;width:10px;height:1px;background:#c9dcee;"></div>
<span class="t a" style="top:160.46px;font-size:16px;color:#000;left:420.60px;">0.002</span>
<span class="t a" style="top:160.46px;font-size:16px;color:#000;right:589.40px;">1,00</span>
<span class="t a" style="top:160.46px;font-size:16px;color:#000;letter-spacing:0.100px;left:623.30px;">Stück</span>
<span class="t a" style="top:160.46px;font-size:16px;color:#000;letter-spacing:0.130px;left:745.60px;">Ausschaltung mit zwei Wandauslässen</span>
<span class="t a" style="top:180.46px;font-size:16px;color:#000;letter-spacing:-0.072px;left:745.60px;">Schaltung 1</span>
<div class="b" style="left:383px;top:231px;width:359px;height:1px;background:#e1eaf0;"></div>
<div class="b" style="left:383px;top:231px;width:10px;height:1px;background:#c9dcee;"></div>
<div class="b" style="left:383px;top:256px;width:778px;height:1px;background:#e1eaf0;"></div>
<div class="b" style="left:383px;top:256px;width:10px;height:1px;background:#c9dcee;"></div>
<span class="t a" style="top:210.46px;font-size:16px;color:#000;left:420.60px;">0.003</span>
<span class="t a" style="top:210.46px;font-size:16px;color:#000;right:589.40px;">1,00</span>
<span class="t a" style="top:210.46px;font-size:16px;color:#000;letter-spacing:0.100px;left:623.30px;">Stück</span>
<span class="t a" style="top:210.46px;font-size:16px;color:#000;letter-spacing:0.163px;left:745.60px;">Ausschaltung up 1DA</span>
<span class="t a" style="top:230.46px;font-size:16px;color:#000;letter-spacing:-0.072px;left:745.60px;">Schaltung 2</span>
<div class="b" style="left:383px;top:281px;width:778px;height:1px;background:#e1eaf0;"></div>
<div class="b" style="left:383px;top:281px;width:10px;height:1px;background:#c9dcee;"></div>
<span class="t a" style="top:260.46px;font-size:16px;color:#000;left:420.60px;">0.004</span>
<span class="t a" style="top:260.46px;font-size:16px;color:#000;right:589.40px;">1,00</span>
<span class="t a" style="top:260.46px;font-size:16px;color:#000;letter-spacing:0.100px;left:623.30px;">Stück</span>
<span class="t a" style="top:260.46px;font-size:16px;color:#000;letter-spacing:0.169px;left:745.60px;">zusätzlicher Wandauslass außen</span>
<div class="b" style="left:383px;top:306px;width:778px;height:1px;background:#e1eaf0;"></div>
<div class="b" style="left:383px;top:306px;width:10px;height:1px;background:#c9dcee;"></div>
<span class="t a" style="top:285.46px;font-size:16px;color:#000;left:420.60px;">0.005</span>
<span class="t a" style="top:285.46px;font-size:16px;color:#000;right:589.40px;">1,00</span>
<span class="t a" style="top:285.46px;font-size:16px;color:#000;letter-spacing:0.100px;left:623.30px;">Stück</span>
<span class="t a" style="top:285.46px;font-size:16px;color:#000;letter-spacing:0.186px;left:745.60px;">SAT-Antennendose 3f Stichleitung</span>
<div class="b" style="left:383px;top:331px;width:359px;height:1px;background:#e1eaf0;"></div>
<div class="b" style="left:383px;top:331px;width:10px;height:1px;background:#c9dcee;"></div>
<div class="b" style="left:383px;top:356px;width:359px;height:1px;background:#e1eaf0;"></div>
<div class="b" style="left:383px;top:356px;width:10px;height:1px;background:#c9dcee;"></div>
<div class="b" style="left:383px;top:381px;width:778px;height:1px;background:#e1eaf0;"></div>
<div class="b" style="left:383px;top:381px;width:10px;height:1px;background:#c9dcee;"></div>
<span class="t a" style="top:310.46px;font-size:16px;color:#000;left:420.60px;">0.006</span>
<span class="t a" style="top:310.46px;font-size:16px;color:#000;right:589.40px;">1,00</span>
<span class="t a" style="top:310.46px;font-size:16px;color:#000;letter-spacing:0.100px;left:623.30px;">Stück</span>
<span class="t a" style="top:310.46px;font-size:16px;color:#000;letter-spacing:0.135px;left:745.60px;">Datenanschlussdose 1f Cat.6 up mit</span>
<span class="t a" style="top:330.46px;font-size:16px;color:#000;letter-spacing:0.093px;left:745.60px;">Leitung Cat.7</span>
<span class="t a" style="top:350.46px;font-size:16px;color:#000;letter-spacing:0.177px;left:745.60px;">Liefern und montieren</span>
<svg class="i" style="left:396px;top:309px" width="17" height="21" viewBox="0 0 17 21"><g fill="#0059a9"><rect x="0" y="0" width="7" height="4" rx=".6"/><rect x="9" y="4" width="7" height="4" rx=".6"/><rect x="9" y="10" width="7" height="4" rx=".6"/><rect x="9" y="16" width="7" height="4" rx=".6"/></g><path d="M3.5 4V18.5H9M3.5 6.5H9M3.5 12.5H9" fill="none" stroke="#2f77bd" stroke-width="1"/></svg>
<div class="b" style="left:383px;top:406px;width:359px;height:1px;background:#e1eaf0;"></div>
<div class="b" style="left:383px;top:406px;width:10px;height:1px;background:#c9dcee;"></div>
<div class="b" style="left:383px;top:431px;width:778px;height:1px;background:#e1eaf0;"></div>
<div class="b" style="left:383px;top:431px;width:10px;height:1px;background:#c9dcee;"></div>
<span class="t a" style="top:385.46px;font-size:16px;color:#000;left:420.60px;">0.007</span>
<span class="t a" style="top:385.46px;font-size:16px;color:#000;right:589.40px;">2,00</span>
<span class="t a" style="top:385.46px;font-size:16px;color:#000;letter-spacing:0.100px;left:623.30px;">Stück</span>
<span class="t a" style="top:385.46px;font-size:16px;color:#000;letter-spacing:0.159px;left:745.60px;">Steckdose 1f up incl. Leitungsanteil</span>
<span class="t a" style="top:405.46px;font-size:16px;color:#000;letter-spacing:0.177px;left:745.60px;">Liefern und montieren</span>
<svg class="i" style="left:396px;top:384px" width="17" height="21" viewBox="0 0 17 21"><g fill="#0059a9"><rect x="0" y="0" width="7" height="4" rx=".6"/><rect x="9" y="4" width="7" height="4" rx=".6"/><rect x="9" y="10" width="7" height="4" rx=".6"/><rect x="9" y="16" width="7" height="4" rx=".6"/></g><path d="M3.5 4V18.5H9M3.5 6.5H9M3.5 12.5H9" fill="none" stroke="#2f77bd" stroke-width="1"/></svg>
<div class="b" style="left:383px;top:456px;width:778px;height:1px;background:#e1eaf0;"></div>
<div class="b" style="left:383px;top:456px;width:10px;height:1px;background:#c9dcee;"></div>
<span class="t a" style="top:435.46px;font-size:16px;color:#000;left:420.60px;">0.008</span>
<span class="t a" style="top:435.46px;font-size:16px;color:#000;letter-spacing:0.100px;left:562.20px;">Titel</span>
<span class="t a" style="top:435.46px;font-size:16px;color:#000;letter-spacing:0.181px;left:745.60px;">Küche</span>
<div class="b" style="left:383px;top:481px;width:359px;height:1px;background:#e1eaf0;"></div>
<div class="b" style="left:383px;top:481px;width:10px;height:1px;background:#c9dcee;"></div>
<div class="b" style="left:383px;top:506px;width:359px;height:1px;background:#e1eaf0;"></div>
<div class="b" style="left:383px;top:506px;width:10px;height:1px;background:#c9dcee;"></div>
<div class="b" style="left:383px;top:531px;width:778px;height:1px;background:#e1eaf0;"></div>
<div class="b" style="left:383px;top:531px;width:10px;height:1px;background:#c9dcee;"></div>
<span class="t a" style="top:460.46px;font-size:16px;color:#000;left:420.60px;">0.008</span>
<span class="t a" style="top:460.46px;font-size:16px;color:#000;right:589.40px;">1,00</span>
<span class="t a" style="top:460.46px;font-size:16px;color:#000;letter-spacing:0.100px;left:623.30px;">Stück</span>
<span class="t a" style="top:460.46px;font-size:16px;color:#000;letter-spacing:0.195px;left:745.60px;">Erweiterung Schaltung in Ausführung</span>
<span class="t a" style="top:480.46px;font-size:16px;color:#000;letter-spacing:0.148px;left:745.60px;">Serienschaltung mit zusätzlichen Decken-</span>
<span class="t a" style="top:500.46px;font-size:16px;color:#000;letter-spacing:-0.225px;left:745.60px;">auslass</span>
<div class="b" style="left:383px;top:556px;width:778px;height:1px;background:#e1eaf0;"></div>
<div class="b" style="left:383px;top:556px;width:10px;height:1px;background:#c9dcee;"></div>
<span class="t a" style="top:535.46px;font-size:16px;color:#000;left:420.60px;">0.009</span>
<span class="t a" style="top:535.46px;font-size:16px;color:#000;letter-spacing:0.100px;left:562.20px;">Titel</span>
<span class="t a" style="top:535.46px;font-size:16px;color:#000;letter-spacing:0.191px;left:745.60px;">HWR</span>
<div class="b" style="left:383px;top:581px;width:778px;height:1px;background:#e1eaf0;"></div>
<div class="b" style="left:383px;top:581px;width:10px;height:1px;background:#c9dcee;"></div>
<span class="t a" style="top:560.46px;font-size:16px;color:#000;left:420.60px;">0.009</span>
<span class="t a" style="top:560.46px;font-size:16px;color:#000;right:589.40px;">1,00</span>
<span class="t a" style="top:560.46px;font-size:16px;color:#000;letter-spacing:0.100px;left:623.30px;">Stück</span>
<span class="t a" style="top:560.46px;font-size:16px;color:#000;letter-spacing:0.136px;left:745.60px;">geschaltete Steckdose incl. Schalter</span>
<div class="b" style="left:383px;top:606px;width:359px;height:1px;background:#e1eaf0;"></div>
<div class="b" style="left:383px;top:606px;width:10px;height:1px;background:#c9dcee;"></div>
<div class="b" style="left:383px;top:631px;width:778px;height:1px;background:#e1eaf0;"></div>
<div class="b" style="left:383px;top:631px;width:10px;height:1px;background:#c9dcee;"></div>
<span class="t a" style="top:585.46px;font-size:16px;color:#000;left:420.60px;">0.010</span>
<span class="t a" style="top:585.46px;font-size:16px;color:#000;right:589.40px;">1,00</span>
<span class="t a" style="top:585.46px;font-size:16px;color:#000;letter-spacing:0.100px;left:623.30px;">Stück</span>
<span class="t a" style="top:585.46px;font-size:16px;color:#000;letter-spacing:0.086px;left:745.60px;">Carportkabel NYY 3x1,5, 10m an Hauswand</span>
<span class="t a" style="top:605.46px;font-size:16px;color:#000;letter-spacing:-0.003px;left:745.60px;">aufgerollt</span>
<div class="b" style="left:383px;top:656px;width:359px;height:1px;background:#e1eaf0;"></div>
<div class="b" style="left:383px;top:656px;width:10px;height:1px;background:#c9dcee;"></div>
<div class="b" style="left:383px;top:681px;width:778px;height:1px;background:#e1eaf0;"></div>
<div class="b" style="left:383px;top:681px;width:10px;height:1px;background:#c9dcee;"></div>
<span class="t a" style="top:635.46px;font-size:16px;color:#000;left:420.60px;">0.011</span>
<span class="t a" style="top:635.46px;font-size:16px;color:#000;right:589.40px;">1,00</span>
<span class="t a" style="top:635.46px;font-size:16px;color:#000;letter-spacing:0.100px;left:623.30px;">Stück</span>
<span class="t a" style="top:635.46px;font-size:16px;color:#000;letter-spacing:0.062px;left:745.60px;">Gartenkabel, NYY 3x1,5, 20m an Hauswand</span>
<span class="t a" style="top:655.46px;font-size:16px;color:#000;letter-spacing:-0.003px;left:745.60px;">aufgerollt</span>
<div class="b" style="left:1163px;top:82px;width:20px;height:602px;background:#f0f0f0;"></div>
<div class="b" style="left:1163px;top:103px;width:19px;height:21px;background:#cdcdcd;"></div>
<svg class="i" style="left:1167.4px;top:88.6px" width="10.4" height="7" viewBox="0 0 10.4 7"><path d="M1.1 5.9L5.2 1.562L9.3 5.9" fill="none" stroke="#585858" stroke-width="2.2"/></svg>
<svg class="i" style="left:1167.4px;top:669px" width="10.4" height="7" viewBox="0 0 10.4 7"><path d="M1.1 1.1L5.2 5.438L9.3 1.1" fill="none" stroke="#585858" stroke-width="2.2"/></svg>
<div class="b" style="left:382px;top:684px;width:801px;height:20px;background:#f0f0f0;"></div>
<div class="b" style="left:403px;top:684px;width:21px;height:19px;background:#cdcdcd;"></div>
<svg class="i" style="left:388px;top:688.4px" width="7" height="10.4" viewBox="0 0 7 10.4"><path d="M5.9 1.1L1.562 5.2L5.9 9.3" fill="none" stroke="#585858" stroke-width="2.2"/></svg>
<svg class="i" style="left:1148px;top:688.4px" width="7" height="10.4" viewBox="0 0 7 10.4"><path d="M1.1 1.1L5.438 5.2L1.1 9.3" fill="none" stroke="#585858" stroke-width="2.2"/></svg>
<span class="t " style="top:706.80px;font-size:15px;color:#3a3a3a;font-weight:bold;letter-spacing:0.718px;left:615.70px;">Netto</span>
<div class="b" style="left:677px;top:707px;width:113px;height:22px;background:#e1eefa;"></div>
<span class="t " style="top:706.63px;font-size:15.5px;color:#555;letter-spacing:0.208px;left:724.00px;">6.396,47</span>
<span class="t " style="top:706.80px;font-size:15px;color:#3a3a3a;font-weight:bold;letter-spacing:-0.061px;left:802.50px;">MwSt.</span>
<div class="b" style="left:865px;top:707px;width:112px;height:22px;background:#e1eefa;"></div>
<span class="t " style="top:706.63px;font-size:15.5px;color:#555;letter-spacing:0.051px;left:911.90px;">1.215,33</span>
<span class="t " style="top:706.80px;font-size:15px;color:#3a3a3a;font-weight:bold;letter-spacing:-0.006px;left:990.60px;">Gesamt</span>
<div class="b" style="left:1065px;top:707px;width:112px;height:22px;background:#e1eefa;"></div>
<span class="t " style="top:706.63px;font-size:15.5px;color:#555;letter-spacing:0.259px;left:1111.40px;">7.611,80</span>
</section>
</main>
<div class="tabstrip">
<div class="b" style="left:1px;top:748px;width:1201px;height:38px;background:#c5dcf0;background-image:linear-gradient(to bottom,#8599a8 0.5px,#9db1c2 1.5px,#aec4d6 2.5px,#b6cde0 3.5px,#bcd4e8 4.5px,#c5dcf0 6.5px)"></div>
<div class="b" style="left:143px;top:748px;width:112px;height:30px;background:#0059a9;border-radius:0 0 3px 3px;background-image:linear-gradient(to bottom,#003f7d 0,#00509a 1.5px,#0059a9 3.5px)"></div>
<span class="t " style="top:753.50px;font-size:15px;color:#c4daef;letter-spacing:0.054px;left:156.60px;">Belegansicht</span>
<div class="b" style="left:7px;top:748px;width:135px;height:30px;background:#e1eefa;border-radius:0 0 4px 4px;box-shadow:0 1.5px 2.5px rgba(40,60,90,.55);clip-path:inset(0 -5px -6px -5px)"></div>
<span class="t " style="top:753.50px;font-size:15px;color:#0059a9;font-weight:bold;letter-spacing:0.174px;left:17.20px;">Tabellenansicht</span>
</div>
<footer class="toolbar">
<div class="b" style="left:1px;top:786px;width:1201px;height:38px;background:#fff;"></div>
<span class="t " style="top:795.15px;font-size:14px;color:#8b9097;letter-spacing:0.352px;left:11.20px;">Position: 0.001 Wohnen</span>
<svg class="i" style="left:183px;top:794px" width="22" height="22" viewBox="0 0 22 22"><g transform="rotate(-43 11 11)"><rect x="0.6" y="7" width="21.2" height="8" rx=".8" fill="#0059a9"/><path d="M3.5 7v2.6M6.5 7v3.4M9.5 7v2.6M12.5 7v3.4M15.5 7v2.6M18.5 7v3.4" stroke="#fff" stroke-width="1"/></g></svg>
<span class="t " style="top:796.02px;font-size:16.667px;color:#0059a9;letter-spacing:0.694px;left:214.50px;">Aufmaß</span>
<svg class="i" style="left:421px;top:794px" width="23" height="22" viewBox="0 0 23 22"><rect x="1" y="1" width="16.2" height="12.8" rx="2.2" fill="#0059a9"/><path d="M3.6 4.6H14.6M3.6 7.6H14.6M3.6 10.6H10" stroke="#fff" stroke-width="1.5"/><path d="M9.5 7.2Q16.2 7.6 16.6 14.2" fill="none" stroke="#fff" stroke-width="5.2"/><path d="M9.8 7.4Q16 7.8 16.5 14.4" fill="none" stroke="#afca0b" stroke-width="3"/><path d="M11.2 13.8H21.8L16.5 21.2Z" fill="#afca0b" stroke="#fff" stroke-width=".6"/></svg>
<span class="t " style="top:796.02px;font-size:16.667px;color:#0059a9;letter-spacing:0.946px;left:452.40px;">Text</span>
<svg class="i" style="left:507px;top:795px" width="17" height="21" viewBox="0 0 17 21"><path fill="#0059a9" d="M1.8 0H10V5.6H15.6V18Q15.6 19.8 13.8 19.8H1.8Q0 19.8 0 18V1.8Q0 0 1.8 0Z"/><path fill="#0059a9" d="M11.2 0.2L15.4 4.4H11.2Z"/></svg>
<span class="t " style="top:796.02px;font-size:16.667px;color:#0059a9;letter-spacing:0.220px;left:537.00px;">Freie Position</span>
<svg class="i" style="left:662px;top:795px" width="23" height="21" viewBox="0 0 23 21"><path d="M1 2.5H21M1 5.9H21M1 9.4H4M18 9.4H21" stroke="#0059a9" stroke-width="1.5" fill="none"/><circle cx="11.1" cy="10.9" r="7" fill="#fff"/><circle cx="11.1" cy="10.9" r="4.8" fill="#fff" stroke="#0059a9" stroke-width="2.4"/><path d="M14.8 14.6L19.2 19.2" stroke="#0059a9" stroke-width="2.9" fill="none"/></svg>
<span class="t " style="top:796.02px;font-size:16.667px;color:#0059a9;letter-spacing:-0.200px;left:694.80px;">Suchen</span>
<svg class="i" style="left:773.6px;top:795px" width="17" height="21" viewBox="0 0 17 21"><path fill="#0059a9" d="M1.8 0H10V5.6H15.6V18Q15.6 19.8 13.8 19.8H1.8Q0 19.8 0 18V1.8Q0 0 1.8 0Z"/><path fill="#0059a9" d="M11.2 0.2L15.4 4.4H11.2Z"/></svg>
<span class="t " style="top:796.02px;font-size:16.667px;color:#0059a9;letter-spacing:0.319px;left:803.60px;">Neu</span>
<svg class="i" style="left:855px;top:795px" width="23" height="21" viewBox="0 0 23 21"><path d="M2.6 10.4L8.4 16.4L19.4 2.6" fill="none" stroke="#afca0b" stroke-width="3.9"/></svg>
<span class="t " style="top:796.02px;font-size:16.667px;color:#0059a9;letter-spacing:0.656px;left:886.70px;">Ändern</span>
<svg class="i" style="left:965px;top:795px" width="17" height="21" viewBox="0 0 17 21"><path fill="#0059a9" d="M1.8 0H10V5.6H15.6V18Q15.6 19.8 13.8 19.8H1.8Q0 19.8 0 18V1.8Q0 0 1.8 0Z"/><path fill="#0059a9" d="M11.2 0.2L15.4 4.4H11.2Z"/></svg>
<svg class="i" style="left:973px;top:803px" width="14" height="13" viewBox="0 0 14 13"><path d="M2.6 2.8L10.8 11M10.8 2.8L2.6 11" stroke="#fff" stroke-width="5" fill="none"/><path d="M3 3.2L10.4 10.6M10.4 3.2L3 10.6" stroke="#e0341a" stroke-width="2.6" fill="none"/></svg>
<span class="t " style="top:796.02px;font-size:16.667px;color:#0059a9;letter-spacing:0.019px;left:996.30px;">Löschen</span>
<svg class="i" style="left:1079px;top:794px" width="23" height="22" viewBox="0 0 23 22"><path d="M3.2 3.4L19.6 19M19.6 3.4L3.2 19" stroke="#e0341a" stroke-width="4.9" fill="none"/></svg>
<span class="t " style="top:796.02px;font-size:16.667px;color:#0059a9;letter-spacing:0.065px;left:1110.90px;">Schließen</span>
</footer>
</body></html>
